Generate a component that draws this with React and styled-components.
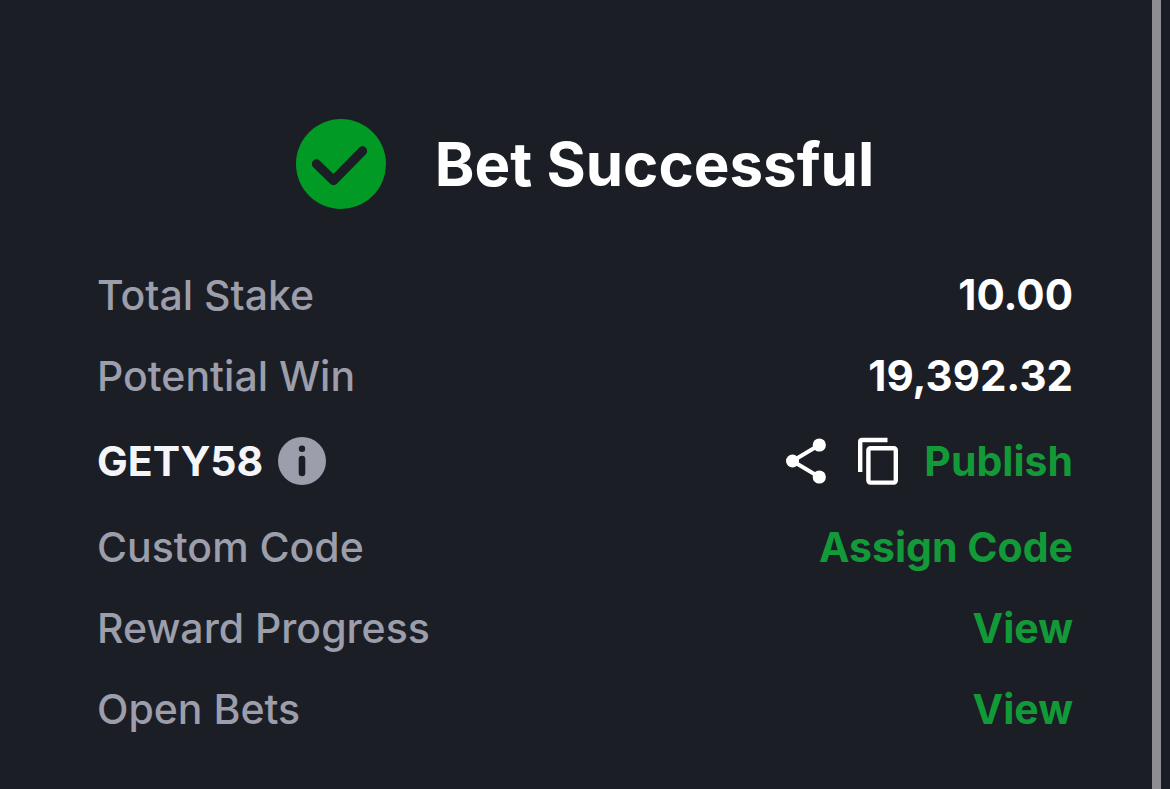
import React from "react";
import styled, { createGlobalStyle } from "styled-components";

const GlobalStyle = createGlobalStyle`
  * { box-sizing: border-box; }
  body {
    margin: 0;
    background: #1c1e26;
    font-family: Inter, "Liberation Sans", sans-serif;
  }
`;

const Page = styled.div`
  display: flex;
  min-height: 100vh;
  background: #1c1e26;
`;

const Panel = styled.main`
  flex: 1;
  min-width: 0;
  padding: 119px 79px 32px 97px;
`;

const Edge = styled.div`
  width: 18px;
  border-left: 9px solid #8e8d92;
  background: #1a1d25;
`;

const Header = styled.header`
  display: flex;
  align-items: center;
  justify-content: center;
  gap: 49px;
  margin-bottom: 45px;
`;

const Title = styled.h1`
  margin: 0;
  font-size: 60px;
  line-height: 90px;
  font-weight: 700;
  color: #ffffff;
  white-space: nowrap;
`;

const Icon = styled.svg`
  display: block;
  flex: none;
`;

const Rows = styled.dl`
  margin: 0;
`;

const Row = styled.div`
  display: flex;
  align-items: center;
  justify-content: space-between;
  min-height: ${(p) => (p.$tall ? 90 : 81)}px;
  font-size: 41px;
  line-height: 48px;
  white-space: nowrap;
`;

const Label = styled.dt`
  display: flex;
  align-items: center;
  gap: 15px;
  font-weight: ${(p) => (p.$strong ? 700 : 500)};
  color: ${(p) => (p.$strong ? "#f3f5f9" : "#9c9eab")};
`;

const Value = styled.dd`
  display: flex;
  align-items: center;
  margin: 0;
  font-weight: 700;
  color: #ffffff;
`;

const Amount = styled.span`
  font-size: 42px;
`;

const IconButton = styled.button`
  margin: 0 ${(p) => p.$after}px 0 0;
  padding: 0;
  border: 0;
  background: none;
  color: ${(p) => p.$color || "#ffffff"};
  cursor: pointer;
`;

const Action = styled.button`
  padding: 0;
  border: 0;
  background: none;
  font: inherit;
  color: #119a37;
  cursor: pointer;
`;

const SuccessIcon = () => (
  <Icon width="90" height="90" viewBox="0 0 90 90" aria-hidden="true">
    <circle cx="45" cy="45" r="45" fill="#009a24" />
    <path
      d="M20.5 45 37.5 61.5 66.5 32"
      fill="none"
      stroke="#1c1e26"
      strokeWidth="9.4"
      strokeLinecap="round"
      strokeLinejoin="round"
    />
  </Icon>
);

const InfoIcon = () => (
  <Icon width="48" height="48" viewBox="0 0 48 48" aria-hidden="true">
    <circle cx="24" cy="24" r="24" fill="currentColor" />
    <circle cx="24" cy="11.7" r="3.2" fill="#1c1e26" />
    <path d="M24 22v14" stroke="#1c1e26" strokeWidth="6.6" strokeLinecap="round" />
  </Icon>
);

const ShareIcon = () => (
  <Icon width="40" height="48" viewBox="0 0 40 48" fill="currentColor" aria-hidden="true">
    <path d="M33.3 8 6.5 24 33.3 40" fill="none" stroke="currentColor" strokeWidth="4" />
    <circle cx="6.5" cy="24" r="6.5" />
    <circle cx="33.3" cy="8" r="6.6" />
    <circle cx="33.3" cy="40" r="6.6" />
  </Icon>
);

const CopyIcon = () => (
  <Icon
    width="40"
    height="48"
    viewBox="0 0 40 48"
    fill="none"
    stroke="currentColor"
    strokeWidth="4.4"
    aria-hidden="true"
  >
    <path d="M29.5 3H4.2Q2.2 3 2.2 5V35" />
    <rect x="10.4" y="11.2" width="27.4" height="34.4" rx="2" />
  </Icon>
);

export default function App() {
  return (
    <>
      <GlobalStyle />
      <Page>
        <Panel>
          <Header>
            <SuccessIcon />
            <Title>Bet Successful</Title>
          </Header>
          <Rows>
            <Row>
              <Label>Total Stake</Label>
              <Value>
                <Amount>10.00</Amount>
              </Value>
            </Row>
            <Row>
              <Label>Potential Win</Label>
              <Value>
                <Amount>19,392.32</Amount>
              </Value>
            </Row>
            <Row $tall>
              <Label $strong>
                GETY58
                <IconButton type="button" aria-label="About this code" $after={0} $color="#9c9eab">
                  <InfoIcon />
                </IconButton>
              </Label>
              <Value>
                <IconButton type="button" aria-label="Share" $after={32}>
                  <ShareIcon />
                </IconButton>
                <IconButton type="button" aria-label="Copy" $after={26}>
                  <CopyIcon />
                </IconButton>
                <Action type="button">Publish</Action>
              </Value>
            </Row>
            <Row>
              <Label>Custom Code</Label>
              <Value>
                <Action type="button">Assign Code</Action>
              </Value>
            </Row>
            <Row>
              <Label>Reward Progress</Label>
              <Value>
                <Action type="button">View</Action>
              </Value>
            </Row>
            <Row>
              <Label>Open Bets</Label>
              <Value>
                <Action type="button">View</Action>
              </Value>
            </Row>
          </Rows>
        </Panel>
        <Edge />
      </Page>
    </>
  );
}
